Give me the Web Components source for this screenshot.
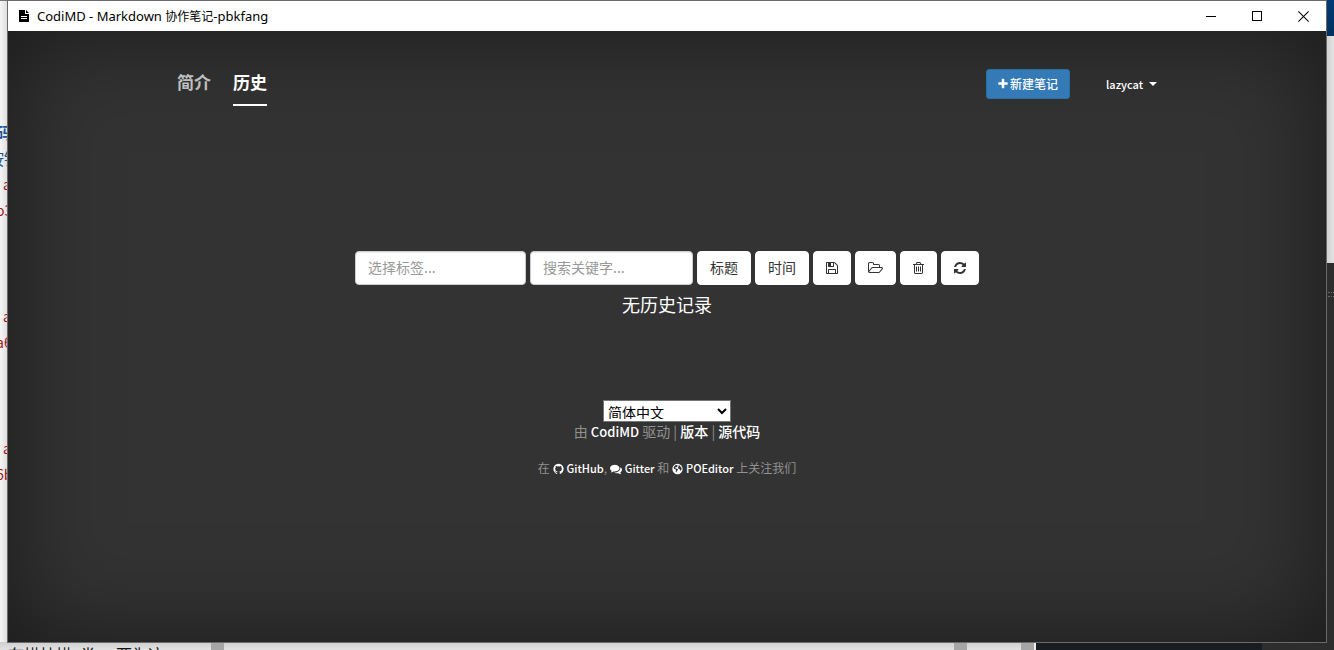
<!DOCTYPE html>
<html lang="zh-CN">
<head>
<meta charset="utf-8">
<title>CodiMD - Markdown 协作笔记</title>
<style>
html, body { margin: 0; height: 100%; overflow: hidden; }
body { font-family: "Noto Sans CJK SC", "Noto Sans", sans-serif; font-size: 14px; line-height: 20px; background: #e4e4e4; }
h1 { font: inherit; margin: 0; white-space: nowrap; }
h1 span { font-size: 12px; }
</style>
</head>
<body>
<desk-top>
  <desk-backdrop slot="behind"></desk-backdrop>
  <app-window>
    <h1 slot="title">CodiMD - Markdown <span>协作笔记</span>-pbkfang</h1>
    <codi-header></codi-header>
    <history-panel></history-panel>
    <codi-footer></codi-footer>
  </app-window>
</desk-top>

<script>
const ICONS = {
  plus: ['192 0 1408 1792', 'M1600 736v192q0 40-28 68t-68 28h-416v416q0 40-28 68t-68 28h-192q-40 0-68-28t-28-68v-416h-416q-40 0-68-28t-28-68v-192q0-40 28-68t68-28h416v-416q0-40 28-68t68-28h192q40 0 68 28t28 68v416h416q40 0 68 28t28 68z'],
  save: ['128 0 1536 1792', 'M512 1536h768v-384h-768v384zm896 0h128v-896q0-14-10-38.5t-20-34.5l-281-281q-10-10-34-20t-39-10v416q0 40-28 68t-68 28h-576q-40 0-68-28t-28-68v-416h-128v1280h128v-416q0-40 28-68t68-28h832q40 0 68 28t28 68v416zm-384-928v-320q0-13-9.5-22.5t-22.5-9.5h-192q-13 0-22.5 9.5t-9.5 22.5v320q0 13 9.5 22.5t22.5 9.5h192q13 0 22.5-9.5t9.5-22.5zm640 32v928q0 40-28 68t-68 28h-1344q-40 0-68-28t-28-68v-1344q0-40 28-68t68-28h928q40 0 88 20t76 48l280 280q28 28 48 76t20 88z'],
  open: ['64 0 1920 1792', 'M1845 931q0-35-53-35h-1088q-40 0-85.5 21.5t-71.5 52.5l-294 363q-18 24-18 40 0 35 53 35h1088q40 0 86-22t71-53l294-363q18-22 18-39zm-1141-163h768v-160q0-40-28-68t-68-28h-576q-40 0-68-28t-28-68v-64q0-40-28-68t-68-28h-320q-40 0-68 28t-28 68v853l256-315q44-53 116-87.5t140-34.5zm1269 163q0 62-46 120l-295 363q-43 53-116 87.5t-140 34.5h-1088q-92 0-158-66t-66-158v-960q0-92 66-158t158-66h320q92 0 158 66t66 158v32h544q92 0 158 66t66 158v160h192q54 0 99 24.5t67 70.5q15 32 15 68z'],
  trash: ['192 0 1408 1792', 'M704 736v576q0 14-9 23t-23 9h-64q-14 0-23-9t-9-23v-576q0-14 9-23t23-9h64q14 0 23 9t9 23zm256 0v576q0 14-9 23t-23 9h-64q-14 0-23-9t-9-23v-576q0-14 9-23t23-9h64q14 0 23 9t9 23zm256 0v576q0 14-9 23t-23 9h-64q-14 0-23-9t-9-23v-576q0-14 9-23t23-9h64q14 0 23 9t9 23zm128 724v-948h-896v948q0 22 7 40.5t14.5 27 10.5 8.5h832q3 0 10.5-8.5t14.5-27 7-40.5zm-672-1076h448l-48-117q-7-9-17-11h-317q-10 2-17 11zm928 32v64q0 14-9 23t-23 9h-96v948q0 83-47 143.5t-113 60.5h-832q-66 0-113-58.5t-47-141.5v-952h-96q-14 0-23-9t-9-23v-64q0-14 9-23t23-9h309l70-167q15-37 54-63t79-26h320q40 0 79 26t54 63l70 167h309q14 0 23 9t9 23z'],
  refresh: ['128 0 1536 1792', 'M1639 1056q0 5-1 7-64 268-268 434.5t-478 166.5q-146 0-282.5-55t-243.5-157l-129 129q-19 19-45 19t-45-19-19-45v-448q0-26 19-45t45-19h448q26 0 45 19t19 45-19 45l-137 137q71 66 161 102t187 36q134 0 250-65t186-179q11-17 53-117 8-23 30-23h192q13 0 22.5 9.5t9.5 22.5zm25-800v448q0 26-19 45t-45 19h-448q-26 0-45-19t-19-45 19-45l138-138q-148-137-349-137-134 0-250 65t-186 179q-11 17-53 117-8 23-30 23h-199q-13 0-22.5-9.5t-9.5-22.5v-7q65-268 270-434.5t480-166.5q146 0 284 55.5t245 156.5l130-129q19-19 45-19t45 19 19 45z'],
  github: ['128 0 1536 1792', 'M896 128q209 0 385.5 103t279.5 279.5 103 385.5q0 251-146.5 451.5t-378.5 277.5q-27 5-40-7t-13-30q0-3 .5-76.5t.5-134.5q0-97-52-142 57-6 102.5-18t94-39 81-66.5 53-105 20.5-150.5q0-119-79-206 37-91-8-204-28-9-81 11t-92 44l-38 24q-93-26-192-26t-192 26q-16-11-42.5-27t-83.5-38.5-85-13.5q-45 113-8 204-79 87-79 206 0 85 20.5 150t52.5 105 80.5 67 94 39 102.5 18q-39 36-49 103-21 10-45 15t-57 5-65.5-21.5-55.5-62.5q-19-32-48.5-52t-49.5-24l-20-3q-21 0-29 4.5t-5 11.5 9 14 13 12l7 5q22 10 43.5 38t31.5 51l10 23q13 38 44 61.5t67 30 69.5 7 55.5-3.5l23-4q0 38 .5 88.5t.5 54.5q0 18-13 30t-40 7q-232-77-378.5-277.5t-146.5-451.5q0-209 103-385.5t279.5-279.5 385.5-103z'],
  comments: ['0 0 1792 1792', 'M1408 768q0 139-94 257t-256.5 186.5-353.5 68.5q-86 0-176-16-124 88-278 128-36 9-86 16h-3q-11 0-20.5-8t-11.5-21q-1-3-1-6.5t.5-6.5 2-6l2.5-5 3.5-5.5 4-5 4.5-5 4-4.5q5-6 23-25t26-29.5 22.5-29 25-38.5 20.5-44q-124-72-195-177t-71-224q0-139 94-257t256.5-186.5 353.5-68.5 353.5 68.5 256.5 186.5 94 257zm384 256q0 120-71 224.5t-195 176.5q10 24 20.5 44t25 38.5 22.5 29 26 29.5 23 25q1 1 4 4.5t4.5 5 4 5 3.5 5.5l2.5 5 2 6 .5 6.5-1 6.5q-3 14-13 22t-22 7q-50-7-86-16-154-40-278-128-90 16-176 16-271 0-472-132 58 4 88 4 161 0 309-45t264-129q125-92 192-212t67-254q0-77-23-152 129 71 204 178t75 230z'],
  globe: ['128 0 1536 1792', 'M896 128a768 768 0 1 1 0 1536a768 768 0 1 1 0-1536zM760 290l-170 60-160 150-110 210 90 170 190 60 70 170-40 180 110 110 70-190 140-170-40-130-190-80-130-20-50-110 130-90 130 30 40-120 110-60-60-120zM1120 330l-110 120 60 110-100 110 60 170 180 40 60 230 100 60 110-190 40-260-90-90-130-30 70-110z'],
  file: ['0 0 10 12', 'M0 0h6v4h4v8H0zM7 0l3 3H7zM2 6v1h6V6zM2 8v1h6V8z'],
  min: ['0 0 11 11', 'M0 5h10v1H0z'],
  max: ['0 0 11 11', 'M0 0h10v10H0zM1 1v8h8V1z'],
  close: ['0 0 11 11', 'M0.7 0L5.5 4.8 10.3 0 11 .7 6.2 5.5 11 10.3 10.3 11 5.5 6.2.7 11 0 10.3 4.8 5.5 0 .7z'],
  caret: ['0 0 8 4', 'M0 0h8L4 4z']
};

class Base extends HTMLElement {
  constructor() {
    super();
    this.attachShadow({ mode: 'open' });
  }
  connectedCallback() { this.shadowRoot.innerHTML = this.view(); }
}

customElements.define('x-icon', class extends Base {
  view() {
    const [box, d] = ICONS[this.getAttribute('name')];
    const w = this.getAttribute('w'), h = this.getAttribute('h');
    return `<style>:host{display:inline-block;flex:none}svg{display:block;fill:currentColor}</style>
    <svg width="${w}" height="${h}" viewBox="${box}" aria-hidden="true"><path fill-rule="evenodd" d="${d}"/></svg>`;
  }
});

customElements.define('desk-top', class extends Base {
  view() {
    return `<style>
      :host { display: grid; grid-template: minmax(0, 1fr) / minmax(0, 1fr); height: 100vh; }
      ::slotted(*) { grid-area: 1 / 1; }
      </style><slot name="behind"></slot><slot></slot>`;
  }
});

/* Other windows, visible only as slivers round the main one. */
customElements.define('desk-backdrop', class extends Base {
  view() {
    return `<style>
      :host { display: grid; grid-template: 1px minmax(0, 1fr) 8px / 8px minmax(0, 1fr) 8px; overflow: hidden; }
      .top { grid-area: 1 / 1 / 2 / 4; display: flex; background: #777; }
      .top i { background: #1c2a40; flex: 0 0 298px; margin-left: auto; }
      .left { grid-area: 2 / 1; background: linear-gradient(90deg, #f6f6f6, #dcdcdc); overflow: hidden; white-space: pre;
        display: flex; flex-direction: column; padding-top: 118px; box-sizing: border-box; font-size: 16px; line-height: 26px; color: #a31515; gap: 80px; }
      .left b, .left span { display: block; }
      .left b, .cn { color: #1a5296; }
      .left b { text-indent: -4px; }
      .cn { text-indent: -12px; }
      .one { text-indent: 3px; font-size: 14px; }
      .two { text-indent: -4px; font-size: 14px; }
      .right { grid-area: 1 / 3 / 4 / 4; display: flex; flex-direction: column; background: #2d2d2d; }
      .right .blue { flex: 0 0 36px; background: linear-gradient(#003c74, #003060); }
      .right .pale { flex: 0 0 227px; background: linear-gradient(90deg, #cfcfcf, #e4e4e4); }
      .right .grip { height: 3px; margin: 29px 0 0 2px; border: dotted #666; border-width: 1px 0; }
      .bottom { grid-area: 3 / 1 / 4 / 4; display: flex; background: linear-gradient(#cfcfcf, #e2e2e2); overflow: hidden; }
      .bottom > * { flex: none; }
      .text { width: 203px; padding-left: 8px; white-space: pre; color: #111; font-size: 16px; line-height: 24px; display: flex; gap: 8px; }
      .text span:last-child { margin-left: 12px; }
      .bar { width: 13px; background: #a6a6a6; }
      .bottom .fill { flex: 1; }
      .pane { width: 54px; }
      .edge { width: 2px; background: #eee; }
      .dark { width: 226px; background: #191d22; }
      .grey { width: 72px; background: #2d2d2d; }
      </style>
      <div class="top"><i></i></div>
      <div class="left" aria-hidden="true">
        <div><b>码</b><span class="cn">按钮</span><span class="one">a</span><span class="two">o3</span></div>
        <div><span class="one">a</span><span class="two">a6</span></div>
        <div><span class="one">a</span><span class="two">6b</span></div>
      </div>
      <div class="right"><div class="blue"></div><div class="pale"></div><div class="grip"></div></div>
      <div class="bottom" aria-hidden="true"><div class="text"><span>在描挂描</span><span>类</span><span>两为这</span></div><div class="bar"></div><div class="fill"></div><div class="bar"></div><div class="pane"></div><div class="bar"></div><div class="edge"></div><div class="dark"></div><div class="grey"></div></div>`;
  }
});

customElements.define('app-window', class extends Base {
  view() {
    return `<style>
      :host { display: flex; flex-direction: column; margin: 1px 8px 8px; z-index: 1; box-shadow: 0 0 0 1px #6a6a6a; background: #333; min-height: 0; }
      header { flex: none; height: 30px; background: #fff; color: #000; display: flex; align-items: center; font: 13px/20px "Noto Sans", "Noto Sans CJK SC", sans-serif; }
      header x-icon { margin: 0 8px 0 11px; }
      ::slotted(h1) { flex: 1; }
      button { all: unset; width: 46px; height: 30px; display: grid; place-items: center; }
      button x-icon { margin: 0; }
      main { flex: 1; min-height: 0; background: #333; box-shadow: inset 0 0 100px rgba(0,0,0,.5); color: #fff; overflow: hidden; }
      </style>
      <header><x-icon name="file" w="10" h="12"></x-icon><slot name="title"></slot>
        <button aria-label="最小化"><x-icon name="min" w="11" h="11"></x-icon></button>
        <button aria-label="最大化"><x-icon name="max" w="11" h="11"></x-icon></button>
        <button aria-label="关闭"><x-icon name="close" w="11" h="11"></x-icon></button>
      </header>
      <main><slot></slot></main>`;
  }
});

customElements.define('codi-header', class extends Base {
  view() {
    return `<style>
      :host { display: flex; align-items: flex-start; max-width: 980px; margin: 0 auto; padding-top: 38px; }
      nav { display: flex; gap: 22px; flex: 1; }
      nav a { font-size: 17px; line-height: 25px; font-weight: 700; color: #bfbfbf; text-decoration: none; padding-bottom: 10px; border-bottom: 2px solid transparent; }
      nav a.active { color: #fff; border-color: #fff; }
      .new { display: flex; align-items: center; gap: 2px; box-sizing: border-box; height: 30px; padding: 0 11px; background: #337ab7; border: 1px solid #2e6da4; border-radius: 3px; color: #fff; font: 500 12px/18px "Noto Sans CJK SC", sans-serif; }
      .user { all: unset; display: flex; align-items: center; gap: 6px; height: 30px; margin-left: 36px; font-size: 11px; font-weight: 500; }
      </style>
      <nav><a href="#intro">简介</a><a href="#history" class="active">历史</a></nav>
      <button class="new"><x-icon name="plus" w="10" h="12"></x-icon>新建笔记</button>
      <button class="user">lazycat<x-icon name="caret" w="8" h="4"></x-icon></button>`;
  }
});

customElements.define('history-panel', class extends Base {
  view() {
    const icons = [['save', 12, '导出'], ['open', 15, '导入'], ['trash', 11, '清空'], ['refresh', 12, '刷新']];
    return `<style>
      :host { display: block; padding-top: 145px; text-align: center; }
      form { display: flex; justify-content: center; gap: 4px; height: 34px; }
      input, button { box-sizing: border-box; margin: 0; height: 34px; padding: 5px 12px 7px; border: 1px solid #ccc; border-radius: 4px; background: #fff; color: #333; font: 14px/20px "Noto Sans CJK SC", sans-serif; }
      input { box-shadow: inset 0 1px 1px rgba(0,0,0,.075); }
      input::placeholder { color: #999; }
      .tags { width: 171px; } .words { width: 163px; }
      button { border-color: #fff; display: flex; align-items: center; }
      button.icon { padding: 6px 12px; }
      h4 { margin: 7px 0 0; font-size: 18px; line-height: 24px; font-weight: 400; }
      </style>
      <form><input class="tags" aria-label="选择标签" placeholder="选择标签..."><input class="words" aria-label="搜索关键字" placeholder="搜索关键字...">
      <button type="button">标题</button><button type="button">时间</button>
      ${icons.map(([n, w, l]) => `<button type="button" class="icon" aria-label="${l}"><x-icon name="${n}" w="${w}" h="14"></x-icon></button>`).join('')}</form>
      <h4>无历史记录</h4>`;
  }
});

customElements.define('codi-footer', class extends Base {
  view() {
    return `<style>
      :host { display: block; padding-top: 84px; text-align: center; color: #919191; }
      select { display: block; margin: 0 auto; width: 128px; height: 22px; box-sizing: border-box; border: 1px solid #767676; border-radius: 0; background: #fff; color: #000; font: 14px/20px "Noto Sans CJK SC", sans-serif; padding: 0 0 2px; }
      p { margin: 0; line-height: 18px; }
      p + p { margin-top: 18px; font-size: 12px; }
      a { color: #fff; text-decoration: none; font-weight: 500; }
      .latin { font-size: 13px; }
      p + p a { font-size: 11px; }
      a x-icon { vertical-align: -2px; margin-right: 3px; }
      </style>
      <select aria-label="语言"><option>简体中文</option></select>
      <p>由 <a class="latin" href="#codimd">CodiMD</a> 驱动 | <a href="#releases">版本</a> | <a href="#source">源代码</a></p>
      <p>在 <a href="#github"><x-icon name="github" w="11" h="12"></x-icon>GitHub</a>, <a href="#gitter"><x-icon name="comments" w="12" h="12"></x-icon>Gitter</a> 和 <a href="#poeditor"><x-icon name="globe" w="11" h="12"></x-icon>POEditor</a> 上关注我们</p>`;
  }
});
</script>
</body>
</html>
